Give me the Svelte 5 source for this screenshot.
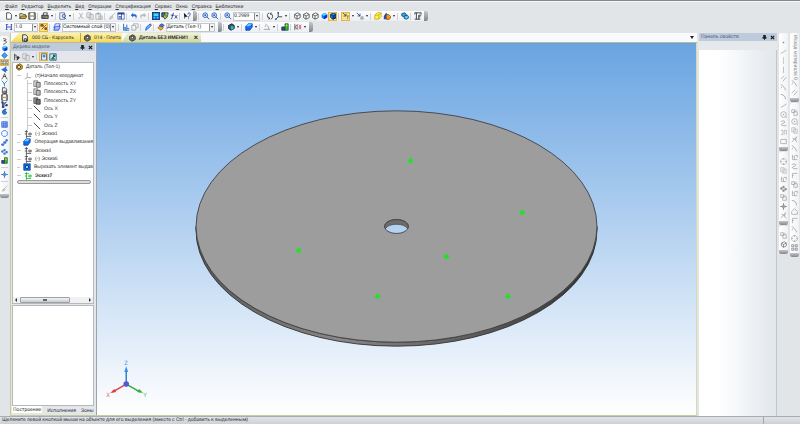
<script>
    const menu = ["Файл", "Редактор", "Выделить", "Вид", "Операции", "Спецификация", "Сервис", "Окно", "Справка", "Библиотеки"];

    //"|" is a separator, "v" a small drop arrow, "#" the grip, "!" marks an active button
    const fileBar = "new v open save | print v | preview v | cut copy paste | brush props | undo redo | manager vars fx | help #".split(" ");
    const viewBar = "refresh axes v | wire wire wire solid !shaded | !pick v snap v | box house v | layers | tf #".split(" ");
    const stateBar = "part v | slab v | sketchgray v | stack | mirror v #".split(" ");
    const leftBar = "spring solid diamond !grid burst compass funnel doc save scatter swirl | grid4 ring chain dots stack | cross | brush".split(" ");
    const sideBars = [
        [
            {icons: "dot slash vline hline dslash arc arc2 slash circle wave steps square".split(" ")},
            {icons: "gear copy scale dots boxes cross star".split(" ")},
            {icons: "boxes wire".split(" ")}
        ],
        [
            {label: "Исход материала 0", icons: "arc dslash".split(" ")},
            {icons: "boxes circle copy star arc scale wave corner boxes scale arc2 house2 corner arc gear grid".split(" ")}
        ]
    ];

    const tree = [
        {level: 0, icon: "part0", text: "Деталь (Тел-1)"},
        {level: 1, icon: "origin", text: "(т)Начало координат"},
        {level: 2, icon: "plane", text: "Плоскость XY"},
        {level: 2, icon: "plane", text: "Плоскость ZX"},
        {level: 2, icon: "plane2", text: "Плоскость ZY"},
        {level: 2, icon: "axis", text: "Ось X"},
        {level: 2, icon: "axis", text: "Ось Y"},
        {level: 2, icon: "axis", text: "Ось Z"},
        {level: 1, icon: "sketch", text: "(-) Эскиз1"},
        {level: 1, icon: "slab", text: "Операция выдавливания"},
        {level: 1, icon: "sketch", text: "Эскиз4"},
        {level: 1, icon: "sketch", text: "(-) Эскиз6"},
        {level: 1, icon: "cutout", text: "Вырезать элемент выдав"},
        {level: 1, icon: "sketchgreen", text: "Эскиз7", bold: true}
    ];

    const points = [[410, 161], [522, 213], [298, 251], [446, 257], [377, 297], [508, 297]];

    //Each icon is a list of [path, fill, stroke] on a 10x10 grid
    const cube = "M2 3L6 1L9 3V7L5 9L2 7Z";
    const icons = {
        new: [["M2 1H6L8 3V9H2Z", "#fff", "#333"]],
        open: [["M1 8V2H4L5 3H8V5", "#ffe680", "#444"], ["M1 8L3 5H10L8 8Z", "#e8c020", "#333"]],
        save: [["M1 1H9V9H1Z", "#a9a38a", "#222"], ["M3 1H7V4H3ZM3 6H7V9H3Z", "#fff", "none"]],
        print: [["M1 4H9V8H1Z", "#777", "#222"], ["M3 1H8L7 4H3Z", "#fff", "#333"], ["M6 6H8V7H6Z", "#e8d000", "none"]],
        preview: [["M1 1H7V9H1Z", "#fff", "#567"], ["M6 3A2 2 0 1 0 6 7A2 2 0 1 0 6 3M7 7L9 9", "#b8e0ff", "#1745a8"]],
        cut: [["M3 1L6 7M7 1L4 7M3 9A1 1 0 1 1 4 7M7 9A1 1 0 1 0 6 7", "none", "#aaa"]],
        copy: [["M1 1H6V7H1ZM4 3H9V9H4Z", "#eee", "#aaa"]],
        paste: [["M1 2H7V9H1ZM3 1H5V3H3ZM5 5H9V9H5Z", "#eee", "#aaa"]],
        brush: [["M9 1L5 5M2 9L3 6L5 5L6 7Z", "#ddd", "#aaa"]],
        props: [["M1 1H9V9H1Z", "#fff", "#4965a8"], ["M1 1H9V3H1ZM5 3H6V9H5ZM2 5H5V6H2ZM2 7H5V8H2Z", "#27489f", "none"]],
        undo: [["M1 4L4 1V3C8 2 10 5 7 9C8 6 7 5 4 5V7Z", "#1d65dc", "none"]],
        redo: [["M9 4L6 1V3C2 2 0 5 3 9C2 6 3 5 6 5V7Z", "#b6bbc2", "none"]],
        manager: [["M0 0H10V10H0Z", "#165cc0", "#0a2860"], ["M2 2H8V5H2ZM2 6H4V8H2ZM6 6H8V8H6Z", "#49dbe8", "none"]],
        vars: [["M1 1H5V6H1Z", "#3d75d4", "#111"], ["M5 1H9L8 6L5 9L3 6Z", "#d5c62b", "#153b5c"], ["M5 3H7V6H5Z", "#24a44b", "none"]],
        fx: [["M1 9C3 9 3 1 5 1M1 4H5M6 4L9 8M9 4L6 8", "none", "#1f2d88"]],
        help: [["M1 1L6 6L3 6L2 9Z", "#111", "none"], ["M6 3C6 0 10 1 9 3C9 5 7 4 7 7M7 8V9", "none", "#1c399c"]],
        zoom: [["M4 1A3 3 0 1 0 4 7A3 3 0 1 0 4 1", "#bfe2ff", "#2652bb"], ["M6 6L9 9M3 4H5M4 3V5", "none", "#1e3d93"]],
        refresh: [["M4 1C1 2 1 7 4 8M6 9C9 8 9 3 6 2M3 9L5 8L3 6M7 1L5 2L7 4", "none", "#222"]],
        axes: [["M4 1V6H9M4 6L1 9", "none", "#222"], ["M0 8H2V10H0ZM3 0H5V2H3Z", "#2456c7", "none"]],
        wire: [[cube + "M2 3L5 5L9 3M5 5V9", "#fff", "#444"]],
        solid: [[cube, "#157bf0", "none"], ["M2 3L6 1L9 3L5 5Z", "#64cfff", "none"], ["M5 5L9 3V7L5 9Z", "#0736c8", "none"]],
        shaded: [[cube, "#1696e6", "#081b50"], ["M5 5L9 3V7L5 9ZM2 3L5 5", "#124bb0", "#081b50"]],
        pick: [["M1 1L5 5M5 5V2M5 5H2", "none", "#245"], ["M6 5H9M7 5V9", "none", "#777"]],
        snap: [["M1 1L5 5M5 5V2M5 5H2", "none", "#123e9c"], ["M6 6H9V9H6Z", "#ccc", "#999"]],
        box: [["M1 4L4 1H9V6L6 9H1ZM1 4H6V9M6 4L9 1", "#fff34d", "#c5ac1a"]],
        house: [["M1 5L4 1L7 5V9H1Z", "#204cae", "none"], ["M4 4L7 3L10 6L8 9H4Z", "#f59b17", "#8a4a10"]],
        layers: [["M1 2L5 1L7 4L4 6L1 5Z", "#35a8db", "#174e88"], ["M4 5L8 4L10 7L7 9L4 8Z", "#4ccff0", "#163a7b"]],
        tf: [["M1 1H9V3M1 1V3M3 1V9M6 4H9M6 4V9M1 9H8M6 6H8", "none", "#222"]],
        part: [[cube, "#255a85", "#111"], ["M5 4H8V8H5Z", "#31c4bb", "none"]],
        slab: [["M1 4L4 1H9V5L6 9H1Z", "#126cf0", "#0938a8"], ["M1 4L4 1H9L6 4Z", "#67c7ff", "none"]],
        sketchgray: [["M3 1L7 5M3 5V3M1 8H9M7 5V8", "none", "#999"]],
        stack: [["M1 5H5V9H1Z", "#2b4bc0", "#223"], ["M5 1H9V9H5Z", "#38b639", "#165c25"], ["M6 2H8V4H6Z", "#f3d833", "none"]],
        mirror: [["M1 1V9M1 5L4 2V8Z", "none", "#555"], ["M6 2L9 5L6 8M9 2L6 5L9 8", "none", "#c34d5a"]],
        ladder: [["M2 2V8M8 2V8M1 2H4M7 2H9M1 8H3M6 8H9M2 5H8", "none", "#1f3cb5"]],
        link: [["M1 2H4V4H1ZM6 6H9V8H6ZM2 8L8 2", "#b47418", "#61420f"]],
        layer: [["M3 1H9L7 6H1Z", "#fff", "#3047cc"], ["M3 4H9L7 9H1Z", "#9dbdff", "#2849d8"]],
        local: [["M2 1V9H9M2 6H5V9M6 2V7H9", "none", "#1553a8"], ["M3 6H6V9H3Z", "#3aa0e8", "none"]],
        ortho: [["M1 3H6V9H1ZM3 3V1H9V6H6", "none", "#a0a5a8"]],
        pencil: [["M2 9L3 5L8 1L9 3L4 8Z", "#61baf3", "#2657c0"], ["M7 2L9 1V3Z", "#df343e", "none"]],
        folder: [["M1 6L5 3L8 6L5 9Z", "#f3b21e", "#9a5b0a"], ["M3 3L6 1L9 3L6 5Z", "#4584ec", "#173c98"]],
        spring: [["M3 1C10 1 7 4 4 4C10 4 8 8 3 9", "none", "#222"]],
        diamond: [["M5 1L9 5L5 9L1 5Z", "#36a5f5", "#1c52cc"]],
        grid: [["M1 1H4V4H1ZM6 1H9V4H6ZM1 6H4V9H1ZM6 6H9V9H6Z", "none", "#3560a8"]],
        grid4: [["M1 1H9V9H1ZM1 4H9M1 7H9M4 1V9M7 1V9", "#b5cdff", "#2a5ad8"]],
        burst: [["M1 5L4 4L7 1V4L9 6L6 7L7 9L4 7Z", "#2370f2", "#25a"]],
        compass: [["M1 9L3 6L5 1L7 6L9 9M3 5H7", "none", "#222"]],
        funnel: [["M1 1L5 5V9M9 1L5 5", "#62d5f0", "#1766bb"]],
        doc: [["M2 1H6L8 3V9H2ZM4 6H7V9H4Z", "#eee", "#222"]],
        scatter: [["M1 1H3V3H1ZM2 8H4V10H2ZM7 5H9V7H7ZM2 3V8L8 1M3 8L8 6", "#38e", "#225"]],
        swirl: [["M8 2C2 1 0 7 4 9C9 9 9 5 6 5V1", "#2683e8", "#174298"]],
        ring: [["M3 1H7L9 3V7L7 9H3L1 7V3Z", "none", "#1c5ff0"]],
        chain: [["M1 7H4V9H1ZM4 4H7V6H4ZM7 1H9V3H7Z", "#58a3ff", "#1948cc"]],
        dots: [["M1 4H3V6H1ZM4 2H6V4H4ZM7 5H9V7H7ZM4 7H6V9H4Z", "#69a7ff", "#235cc0"]],
        cross: [["M5 0V10M0 5H10M5 2L8 5L5 8L2 5Z", "none", "#2768cf"]],
        part0: [["M2 3L6 1L9 3V7L5 9L2 7Z", "#edb32f", "#5c3e08"], ["M5 3A2 2 0 1 0 5 7A2 2 0 1 0 5 3", "#fff1a3", "#333"]],
        origin: [["M4 1V7H9M4 7L1 9", "none", "#999"]],
        plane: [["M1 1H6V8H1Z", "#ddd", "#777"], ["M4 3H9V9H4Z", "#bbb", "#555"]],
        plane2: [["M1 1H6V8H1Z", "#999", "#555"], ["M4 3H9V9H4Z", "#777", "#333"]],
        axis: [["M1 1L9 9", "none", "#222"]],
        sketch: [["M3 0V10M1 2H5M3 8H9M6 4H9V6H6ZM1 5H4", "none", "#444"]],
        sketchgreen: [["M3 0V10M1 2H6M3 8H9M6 4H9V6H6ZM1 5H4", "none", "#0cb51e"]],
        cutout: [["M1 1H9V9H1Z", "#0a78e8", "#0836a0"], ["M5 3A2 2 0 1 0 5 7A2 2 0 1 0 5 3", "#9df0ff", "#082050"]],
        gearcubes: [[cube, "#888", "#222"], ["M4 3H7V6H4Z", "#eee", "#333"]],
        arrowtree: [["M2 1V9M2 2L5 4M3 5L7 6M5 9L8 6L6 4Z", "#222", "#333"]],
        list: [["M2 1H8V9H2ZM4 3H6V5H4Z", "#dff", "#2a4599"]],
        image: [["M1 1H9V9H1Z", "#c7f0c0", "#2149a0"], ["M2 8L5 4L8 8Z", "#187e3b", "none"], ["M5 2H8V5H5Z", "#274fc6", "none"]],
        dot: [["M4 4H6V6H4Z", "#666", "none"]],
        slash: [["M1 8L9 3", "none", "#888"]],
        vline: [["M5 0V10", "none", "#aaa"]],
        hline: [["M5 1V9M4 9H6", "none", "#999"]],
        dslash: [["M1 6L6 1M4 9L9 3", "none", "#888"]],
        arc: [["M1 1C2 1 6 3 8 9M3 4L1 6", "none", "#777"]],
        arc2: [["M1 2C5 2 8 5 8 9", "none", "#777"]],
        circle: [["M5 1A4 4 0 1 0 5 9A4 4 0 1 0 5 1M5 4V6M4 5H6M9 8V10", "none", "#888"]],
        wave: [["M1 2C8 0 8 4 4 5S2 9 9 8", "none", "#777"]],
        steps: [["M1 2H4V8H1M6 8V2H9V8", "none", "#999"]],
        square: [["M1 2H9V8H1Z", "none", "#888"]],
        gear: [["M3 1H7L9 3V7L7 9H3L1 7V3ZM5 0V3M5 7V10M0 5H3M7 5H10", "none", "#999"]],
        scale: [["M2 1V8H9M2 4H5V8M5 2H9V5", "none", "#888"]],
        boxes: [["M1 1H5V5H1ZM4 4H9V9H4ZM7 1V4", "none", "#888"]],
        star: [["M1 9L8 1L6 6L9 9M2 3L8 6", "none", "#888"]],
        corner: [["M2 9V2H9M2 5H4", "none", "#888"]],
        house2: [["M1 5L5 1L9 5V9H1Z", "none", "#888"]]
    };
</script>

{#snippet icon(name)}
    <svg class="icon" viewBox="0 0 10 10" aria-hidden="true">
        {#each icons[name] as [d, fill, stroke]}
            <path {d} {fill} {stroke}/>
        {/each}
    </svg>
{/snippet}

{#snippet tools(items)}
    {#each items as item}
        {#if item === "|"}
            <span class="separator"></span>
        {:else if item === "v"}
            <button class="caret" aria-label="Ещё"></button>
        {:else if item === "#"}
            <span class="grip"></span>
        {:else}
            {@const name = item.replace("!", "")}
            <button class="tool" class:active={item[0] === "!"} aria-label={name}>{@render icon(name)}</button>
        {/if}
    {/each}
{/snippet}

{#snippet combo(label, value, size)}
    <span class="combo {size}">
        <select aria-label={label}>
            <option>{value}</option>
        </select>
        <span class="drop"></span>
    </span>
{/snippet}

{#snippet panelTitle(text)}
    <header class="panelTitle">
        <h2>{text}</h2>
        <button aria-label="Закрепить">
            <svg viewBox="0 0 6 6"><path d="M2 0H4V3H5V4H1V3H2ZM3 4V6" fill="#222" stroke="#222"/></svg>
        </button>
        <button aria-label="Закрыть">
            <svg viewBox="0 0 6 6"><path d="M1 1L5 5M5 1L1 5" stroke="#111" stroke-width="1.3"/></svg>
        </button>
    </header>
{/snippet}

<div class="App">
    <nav class="menu">
        {#each menu as item}
            <button><u>{item[0]}</u>{item.slice(1)}</button>
        {/each}
    </nav>

    <div class="toolbar">
        {@render tools(fileBar)}
        {@render tools(["|", "zoom", "zoom", "|", "zoom"])}
        {@render combo("Масштаб", "0.2989", "small")}
        {@render tools(["|", ...viewBar])}
    </div>

    <div class="toolbar">
        {@render tools(["ladder"])}
        {@render combo("Шаг", "1.0", "tiny")}
        {@render tools(["!link", "|", "layer"])}
        {@render combo("Слой", "Системный слой (0)", "wide")}
        {@render tools(["|", "local", "ortho", "|", "pencil", "|", "folder"])}
        {@render combo("Деталь", "Деталь (Тел-1)", "medium")}
        {@render tools(["#", "|", ...stateBar])}
    </div>

    <main>
        <div class="leftTools">
            <div class="strip colored">
                {@render tools(leftBar)}
                <span class="grip"></span>
            </div>
        </div>

        <section class="document">
            <div class="tabs">
                <button class="tab">{@render icon("doc")}000 СБ - Карусель</button>
                <button class="tab second">{@render icon("gearcubes")}014 - Плита</button>
                <button class="tab current">{@render icon("gearcubes")}Деталь БЕЗ ИМЕНИ1 <span class="close">×</span></button>
                <button class="tabList" aria-label="Список окон"></button>
            </div>

            <div class="workspace">
                <aside class="model">
                    {@render panelTitle("Дерево модели")}
                    <div class="modelTools">
                        {@render tools(["arrowtree", "copy", "v", "|", "!list", "image"])}
                    </div>
                    <div class="treeBox">
                        <ul>
                            {#each tree as node}
                                <li class="level{node.level}" class:bold={node.bold}>
                                    {@render icon(node.icon)}
                                    <span>{node.text}</span>
                                </li>
                            {/each}
                        </ul>
                        <div class="endBar"></div>
                        <div class="scroll">
                            <i class="arrow left"></i>
                            <div class="track"><div class="thumb"></div></div>
                            <i class="arrow right"></i>
                        </div>
                    </div>
                    <div class="lowerBox"></div>
                    <div class="modelTabs">
                        <button class="on">Построение</button>
                        <button>Исполнения</button>
                        <button>Зоны</button>
                    </div>
                </aside>

                <div class="view">
                    <svg viewBox="97 43 598 373" role="img" aria-label="Деталь">
                        <defs>
                            <linearGradient id="side">
                                <stop offset="0" stop-color="#555"/>
                                <stop offset="0.35" stop-color="#8a8886"/>
                                <stop offset="0.6" stop-color="#6a6867"/>
                                <stop offset="1" stop-color="#333"/>
                            </linearGradient>
                        </defs>
                        <path d="M195 227V231A201 116 0 0 0 597 231V227A201 116 0 0 1 195 227Z" fill="url(#side)" stroke="#333" stroke-width="0.9"/>
                        <path fill-rule="evenodd" d="M195 227A201 116 0 0 1 597 227A201 116 0 0 1 195 227ZM384 227A12 7 0 0 0 408 227A12 7 0 0 0 384 227Z" fill="#9d9d9d" stroke="#3f4145" stroke-width="0.9"/>
                        <path d="M384 227A12 7 0 0 1 408 227L407 229A12 7 0 0 0 385 229Z" fill="#6f6b69" stroke="#333" stroke-width="0.6"/>

                        {#each points as [x, y]}
                            <path d="M{x} {y - 3}V{y + 3}M{x - 3} {y}H{x + 3}M{x - 2} {y - 2}L{x + 2} {y + 2}M{x + 2} {y - 2}L{x - 2} {y + 2}" stroke="#0bed16" stroke-width="1"/>
                        {/each}

                        <g stroke-width="1.4">
                            <path d="M125 385V370" stroke="#2878c8"/>
                            <path d="M125 385L111 393" stroke="#d84444"/>
                            <path d="M125 385L139 393" stroke="#35a53a"/>
                        </g>
                        <path d="M125 367L127 373H123Z" fill="#3d91e8"/>
                        <path d="M109 394L113 390L115 393Z" fill="#e33e3e"/>
                        <path d="M142 394L136 393L138 390Z" fill="#27b832"/>
                        <circle cx="125" cy="385" r="2.8" fill="#5558cf"/>
                        <text x="123" y="366" fill="#5b9be8">Z</text>
                        <text x="105" y="398" fill="#ec6a6a">X</text>
                        <text x="142" y="398" fill="#5ac55e">Y</text>
                    </svg>
                </div>
            </div>
        </section>

        <aside class="properties">
            {@render panelTitle("Панель свойств")}
            <div class="propertyBody"></div>
        </aside>

        {#each sideBars as column}
            <div class="sideTools">
                {#each column as bar}
                    <div class="strip" class:labelled={bar.label}>
                        {#if bar.label}<span class="vertical">{bar.label}</span>{/if}
                        {@render tools(bar.icons)}
                        <span class="grip"></span>
                    </div>
                {/each}
            </div>
        {/each}
    </main>

    <footer>
        <p>Щелкните левой кнопкой мыши на объекте для его выделения (вместе с Ctrl - добавить к выделенным)</p>
        <span></span>
    </footer>
</div>

<style>
    :global(body){
        background: #e1e5e8;
    }

    .App{
        display: flex;
        flex-direction: column;
        box-sizing: border-box;
        height: 100vh;
        overflow: hidden;
        border-top: 1px solid #85858a;
        background: #e1e5e8;
        color: #333;
        font-family: Roboto, "Noto Sans", sans-serif;
        font-size: 5px;
        line-height: 8px;
        text-rendering: geometricPrecision;
    }

    button{
        display: flex;
        align-items: center;
        padding: 0;
        border: 0;
        background: none;
        color: inherit;
        font: inherit;
        text-rendering: inherit;
        white-space: nowrap;
    }

    .icon{
        display: block;
        flex: none;
        width: 8px;
        height: 8px;
    }

    .menu{
        display: flex;
        flex: none;
        gap: 4px;
        height: 10px;
        padding-left: 5px;
        border-top: 1px solid #f8f9fa;
        box-sizing: border-box;
    }

    .toolbar{
        display: flex;
        flex: none;
        align-items: center;
        align-self: flex-start;
        height: 10px;
        margin-bottom: 1px;
        padding-left: 4px;
        border-radius: 2px;
        background: linear-gradient(#fdfdfe, #eceff2);
    }

    .tool{
        flex: none;
        justify-content: center;
        width: 9px;
        height: 9px;
    }

    .tool.active{
        outline: 1px solid #e2b64a;
        outline-offset: -1px;
        background: #ffe08a;
    }

    .caret{
        flex: none;
        justify-content: center;
        width: 5px;
        height: 9px;
    }

    .caret::before, .drop::before, .tabList::before{
        content: "";
        border: 1px solid transparent;
        border-top: 2px solid #222;
        border-bottom: 0;
    }

    .separator{
        flex: none;
        width: 1px;
        height: 7px;
        margin: 0 2px 0 1px;
        background: #cdd2d7;
    }

    .grip{
        flex: none;
        width: 4px;
        height: 10px;
        margin-left: 2px;
        border-radius: 0 2px 2px 0;
        background: linear-gradient(#c3c6cb, #83868c);
    }

    .combo{
        display: flex;
        flex: none;
        box-sizing: border-box;
        height: 9px;
        margin: 0 1px;
        border: 1px solid #c3c8ce;
        background: #fff;
    }

    .combo select{
        flex: 1;
        min-width: 0;
        padding: 0;
        border: 0;
        appearance: none;
        background: none;
        color: #222;
        font: inherit;
        line-height: 7px;
        text-rendering: inherit;
    }

    .drop{
        display: flex;
        flex: none;
        align-items: center;
        justify-content: center;
        width: 5px;
        border-left: 1px solid #8e9297;
        box-sizing: border-box;
        background: #f2f2f2;
    }

    .tiny{
        width: 24px;
    }

    .small{
        width: 27px;
    }

    .medium{
        width: 49px;
    }

    .wide{
        width: 54px;
    }

    main{
        display: flex;
        flex: 1;
        min-height: 0;
    }

    .leftTools{
        width: 10px;
        padding-top: 3px;
    }

    .strip{
        display: flex;
        flex-direction: column;
        align-items: center;
        width: 9px;
        padding-top: 5px;
        border-radius: 2px;
        background: linear-gradient(90deg, #fff, #f0f2f4);
    }

    .strip .icon{
        width: 7px;
        height: 7px;
    }

    .colored, .labelled{
        padding-top: 2px;
    }

    .colored .tool{
        height: 7px;
    }

    .colored .separator ~ .tool{
        height: 9px;
    }

    .sideTools .tool{
        filter: grayscale(1) opacity(0.8);
    }

    .strip .separator{
        width: 7px;
        height: 1px;
        margin: 2px 0;
    }

    .strip .grip{
        width: 9px;
        height: 4px;
        margin: 1px 0 0;
        border-radius: 0 0 2px 2px;
    }

    .document{
        display: flex;
        flex: 1;
        flex-direction: column;
        min-width: 0;
        border-left: 1px solid #c4cd9b;
    }

    .tabs{
        display: flex;
        flex: none;
        height: 9px;
        background: #f9fafb;
        border-bottom: 1px solid #b9be8c;
    }

    .tab{
        box-sizing: border-box;
        gap: 3px;
        width: 69px;
        padding-left: 10px;
        clip-path: polygon(8px 0, 100% 0, 100% 100%, 0 100%);
        background: linear-gradient(#fff3a0, #f5d75f);
    }

    .tab.second{
        width: 42px;
        padding-left: 2px;
        clip-path: none;
        border-left: 1px solid #c3a643;
    }

    .tab.current{
        width: 79px;
        padding-left: 6px;
        background: linear-gradient(#f1f4d4, #cdd7a1);
        clip-path: polygon(5px 0, 100% 0, 100% 100%, 0 100%);
        font-weight: bold;
    }

    .close{
        margin-left: auto;
        padding-right: 3px;
        font-size: 8px;
    }

    .tabList{
        margin-left: auto;
        padding-right: 3px;
    }

    .tabList::before{
        border-width: 3px 2px 0;
    }

    .workspace{
        display: flex;
        flex: 1;
        min-height: 0;
        border-bottom: 1px solid #c4cd9b;
    }

    .model{
        display: flex;
        flex: none;
        flex-direction: column;
        width: 84px;
        border-right: 1px solid #9ea3a8;
        padding-right: 1px;
        background: #e3e6ea;
    }

    .panelTitle{
        display: flex;
        flex: none;
        align-items: center;
        gap: 3px;
        height: 8px;
        padding: 0 2px;
        background: #bdcbdc;
    }

    .panelTitle h2{
        flex: 1;
        margin: 0;
        color: #536174;
        font-size: 5px;
        font-weight: normal;
    }

    .panelTitle svg{
        width: 5px;
        height: 5px;
    }

    .modelTools{
        display: flex;
        align-items: center;
        height: 11px;
        padding-left: 1px;
    }

    .treeBox{
        display: flex;
        flex: none;
        flex-direction: column;
        box-sizing: border-box;
        height: 242px;
        margin: 0 1px;
        border: 1px solid #b5b9be;
        background: #fff;
    }

    ul{
        display: grid;
        grid-template-rows: repeat(14, 1fr);
        height: 117px;
        margin: 0;
        padding: 0;
        font-family: "Liberation Sans", Arial, sans-serif;
        list-style: none;
    }

    li{
        display: flex;
        align-items: center;
        gap: 3px;
        min-width: 0;
        white-space: nowrap;
    }

    .level0{
        padding-left: 2px;
    }

    .level1{
        padding-left: 4px;
    }

    .level1::before{
        content: "";
        width: 4px;
        margin-right: -3px;
        border-top: 1px solid #ccc;
    }

    .level1 .icon{
        margin-left: 3px;
    }

    .level2{
        margin-left: 14px;
        padding-left: 0;
        border-left: 1px solid #ccc;
    }

    .level2::before{
        content: "";
        width: 4px;
        margin-right: -2px;
        border-top: 1px solid #ccc;
    }

    .bold{
        font-weight: bold;
    }

    .endBar{
        height: 2px;
        margin: 0 2px 0 4px;
        border: 1px solid #999;
        border-radius: 2px;
        background: #ddd;
    }

    .scroll{
        display: flex;
        align-items: center;
        height: 6px;
        margin-top: auto;
        padding: 0 2px;
        background: #f1f1f2;
    }

    .arrow{
        border: 2px solid transparent;
    }

    .left{
        border-left: 0;
        border-right-color: #333;
    }

    .right{
        border-right: 0;
        border-left-color: #333;
    }

    .track{
        flex: 1;
        padding: 0 3px;
    }

    .thumb{
        box-sizing: border-box;
        width: 76%;
        height: 6px;
        border: 1px solid #9da0a5;
        border-radius: 1px;
        background: linear-gradient(90deg, transparent 22px, #666 22px, #666 26px, transparent 26px) center / auto 2px no-repeat, linear-gradient(#f5f5f5, #c8cacd);
    }

    .lowerBox{
        flex: 1;
        margin: 1px 1px 0;
        border: 1px solid #b5b9be;
        background: #fff;
    }

    .modelTabs{
        display: flex;
        flex: none;
        gap: 5px;
        height: 9px;
        padding-left: 1px;
    }

    .modelTabs .on{
        margin-bottom: 2px;
        padding: 0 1px;
        background: #fff;
    }

    .view{
        flex: 1;
        min-width: 0;
        border-right: 1px solid #d5ddb0;
        background: linear-gradient(#69a4e2, #fff);
    }

    .view svg{
        display: block;
        width: 100%;
        height: 100%;
    }

    .view text{
        font-size: 6px;
    }

    .properties{
        display: flex;
        flex: none;
        flex-direction: column;
        width: 78px;
        margin: 0 1px 0 2px;
        background: #e6e9ec;
    }

    .propertyBody{
        flex: 1;
        margin-top: 9px;
        border-right: 1px solid #c2c5ca;
        background: linear-gradient(90deg, #fff 25%, #e2e7ec);
    }

    .sideTools{
        display: flex;
        flex: none;
        flex-direction: column;
        gap: 1px;
        width: 10px;
        padding-left: 1px;
    }

    .vertical{
        height: 44px;
        color: #888;
        line-height: 9px;
        white-space: nowrap;
        writing-mode: vertical-rl;
    }

    footer{
        display: flex;
        flex: none;
        align-items: center;
        box-sizing: border-box;
        height: 8px;
        border-top: 1px solid #a9adb2;
        background: linear-gradient(#e1e4e8, #cdd1d6);
    }

    footer p{
        flex: 1;
        margin: 0;
        padding-left: 2px;
        line-height: 7px;
        white-space: nowrap;
    }

    footer span{
        width: 36px;
        height: 7px;
        border-left: 1px solid #a4a8ad;
    }
</style>
